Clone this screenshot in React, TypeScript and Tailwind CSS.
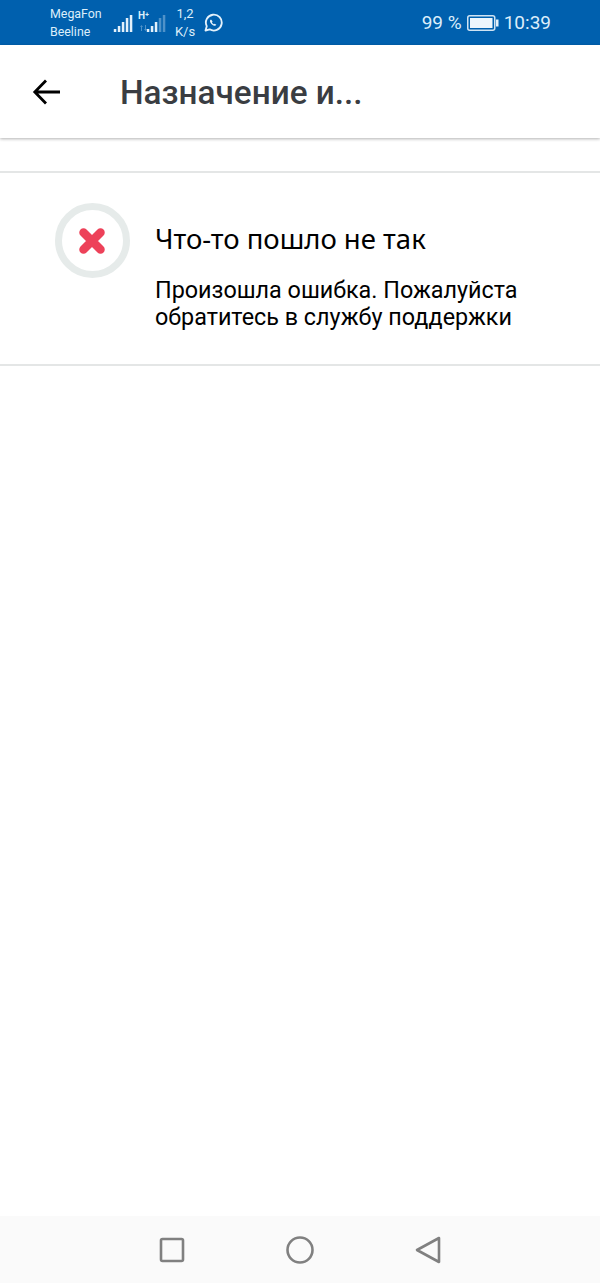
import React from "react";

const Bars = ({ bars, dim = 0 }: { bars: number[]; dim?: number }) => (
  <svg width="20" height="18" viewBox="0 0 20 18" className="block">
    {bars.map((h, i) => (
      <rect key={i} x={0.8 + i * 4} y={18 - h} width="2.5" height={h} fill="#e3f1fb" opacity={i >= bars.length - dim ? 0.35 : 1} />
    ))}
  </svg>
);

export default function App() {
  return (
    <div className="w-[600px] h-[1283px] bg-white flex flex-col overflow-hidden font-['Roboto',sans-serif]">
      <div className="h-[45px] shrink-0 bg-[#0060ae] text-[#dceefa] flex items-center">
        <div className="ml-[50px] w-[56px] flex flex-col text-[12.4px] leading-[18px]">
          <span>MegaFon</span>
          <span>Beeline</span>
        </div>
        <div className="ml-[7px] mt-[1px]"><Bars bars={[3, 6, 10, 14, 17]} /></div>
        <div className="ml-[5px] w-[28px] relative h-[18px] mt-[1px]">
          <span className="absolute left-0 top-[-3px] text-[10px] font-bold leading-[10px]">H⁺</span>
          <svg width="8" height="6" viewBox="0 0 8 6" className="absolute left-[2px] top-[11px]" fill="#e3f1fb" opacity="0.35">
            <path d="M1 6V2H0l1.5-2L3 2H2v4zM5 0v4H4l1.5 2L7 4H6V0z" />
          </svg>
          <div className="absolute left-[8px] top-0"><Bars bars={[3, 6, 10, 14, 17]} dim={2} /></div>
        </div>
        <div className="ml-[4px] w-[30px] flex flex-col items-center text-[13px] leading-[18px]">
          <span>1,2</span>
          <span>K/s</span>
        </div>
        <svg width="20" height="20" viewBox="0 0 24 24" fill="none" stroke="#e3f1fb" strokeWidth="2.2" className="ml-[3px]">
          <path d="M3 21l1.5-5.2A9.5 9.5 0 1 1 8 19.6L3 21z" strokeLinejoin="round" />
          <path d="M9 8c-.8.8-.9 2 0 3.6 1 1.7 2.4 3 4.3 3.6 1.2.3 2.2 0 2.7-1l-2-1.4-1 .8c-1-.5-1.8-1.3-2.3-2.4l.8-1L10 8H9z" fill="#e3f1fb" stroke="none" />
        </svg>
        <div className="ml-auto mr-[49px] mt-[1px] flex items-center text-[19px]">
          <span>99 %</span>
          <svg width="32" height="16" viewBox="0 0 32 16" className="ml-[5px]">
            <rect x="0.75" y="0.75" width="27" height="14.5" rx="2" fill="none" stroke="#cfe3f3" strokeWidth="1.5" />
            <rect x="3" y="3" width="22.5" height="10" fill="#eef6fc" />
            <rect x="29" y="4.5" width="2.5" height="7" fill="#e3f1fb" />
          </svg>
          <span className="ml-[5px]">10:39</span>
        </div>
      </div>

      <div className="h-[93px] shrink-0 bg-white flex items-center shadow-[0_1px_3px_rgba(0,0,0,0.3)] relative">
        <svg width="30" height="30" viewBox="0 0 30 30" fill="none" stroke="#000" strokeWidth="2.8" className="ml-[32px]">
          <path d="M28 15H3M14 3.5 2.8 15 14 26.5" />
        </svg>
        <span className="ml-[58px] mt-[2px] text-[33.3px] font-medium text-[#3a3d42] leading-none">Назначение и...</span>
      </div>

      <div className="mt-[33px] h-[195px] shrink-0 border-y-2 border-[#e4e6e6] flex">
        <div className="ml-[55px] mt-[30px] w-[75px] h-[75px] rounded-full border-[7px] border-[#e6ebea] flex items-center justify-center shrink-0">
          <svg width="28" height="28" viewBox="0 0 28 28" fill="none" stroke="#ed4159" strokeWidth="8.5" strokeLinecap="round" className="ml-[-2px]">
            <path d="M5.5 5.5 22.5 22.5M22.5 5.5 5.5 22.5" />
          </svg>
        </div>
        <div className="ml-[25px] text-black">
          <div className="mt-[49px] text-[27.5px] leading-[34px] font-['Noto_Sans',sans-serif]">Что-то пошло не так</div>
          <div className="mt-[21px] text-[23.35px] leading-[27px]">
            Произошла ошибка. Пожалуйста<br />обратитесь в службу поддержки
          </div>
        </div>
      </div>

      <div className="mt-auto h-[67px] shrink-0 bg-[#fafafa] flex items-center justify-center gap-[100px]">
        <svg width="28" height="28" viewBox="0 0 28 28" fill="none" stroke="#808080" strokeWidth="2.6">
          <rect x="3" y="3" width="22" height="22" rx="1.5" />
        </svg>
        <svg width="28" height="28" viewBox="0 0 28 28" fill="none" stroke="#808080" strokeWidth="2.6">
          <circle cx="14" cy="14" r="12.5" />
        </svg>
        <svg width="28" height="28" viewBox="0 0 28 28" fill="none" stroke="#808080" strokeWidth="2.6" strokeLinejoin="round">
          <path d="M25 2 3 14 25 26Z" />
        </svg>
      </div>
    </div>
  );
}
